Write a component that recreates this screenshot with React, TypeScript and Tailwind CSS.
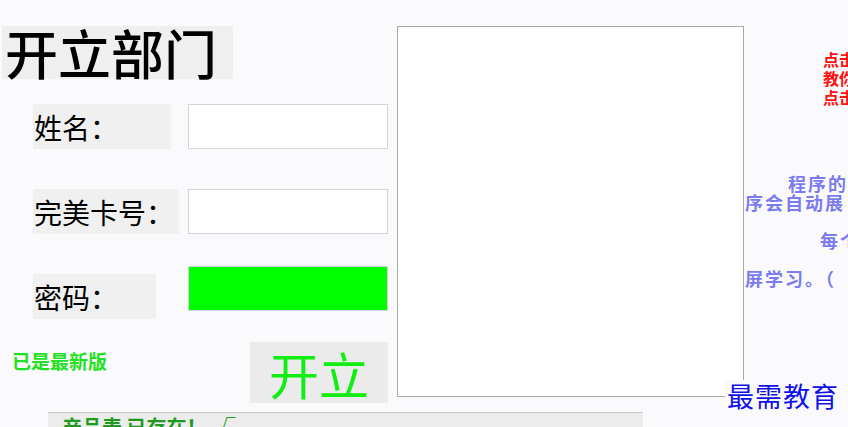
import React from "react";

const cjk = { fontFamily: '"Noto Sans CJK SC", "Noto Sans", sans-serif' };

function LabelRow({ label, labelWidth, children, labelOffset = 0 }: { label: string; labelWidth: number; children: React.ReactNode; labelOffset?: number }) {
  return (
    <div className="flex items-start pl-[33px]">
      <div className="w-[155px] shrink-0" style={{ paddingTop: labelOffset }}>
        <div className="flex h-[45px] items-center bg-[#f0f0f0] pl-[1px] text-[28px] leading-none text-black" style={{ width: labelWidth }}>
          {label}
        </div>
      </div>
      {children}
    </div>
  );
}

export default function App() {
  return (
    <div className="relative h-[427px] w-[848px] overflow-hidden bg-[#fafafc]" style={cjk}>
      <div className="flex">
        {/* left form column */}
        <div className="flex w-[397px] shrink-0 flex-col">
          <div className="ml-[2px] mt-[26px] flex h-[53px] w-[231px] items-center bg-[#efefef] pl-[3px] text-[53px] font-medium leading-none text-black">
            开立部门
          </div>

          <div className="mt-[25px] flex flex-col gap-[40px]">
            <LabelRow label="姓名：" labelWidth={138}>
              <div className="h-[45px] w-[200px] border border-[#d4d4d8] bg-white" />
            </LabelRow>
            <LabelRow label="完美卡号：" labelWidth={146}>
              <div className="h-[45px] w-[200px] border border-[#d4d4d8] bg-white" />
            </LabelRow>
          </div>

          <div className="mt-[32px]">
            <LabelRow label="密码：" labelWidth={123} labelOffset={8}>
              <div className="h-[45px] w-[200px] border border-[#d4d4d8] bg-[#00ff00]" />
            </LabelRow>
          </div>

          <div className="mt-[23px] flex items-start">
            <div className="ml-[12px] mt-[8px] w-[238px] text-[19px] font-bold leading-[22px] text-[#22e022]">已是最新版</div>
            <div className="flex h-[61px] w-[138px] items-center justify-center bg-[#ebebeb] text-[50px] leading-none text-[#11ee11]">
              开立
            </div>
          </div>
        </div>

        {/* preview box */}
        <div className="mt-[26px] h-[371px] w-[347px] shrink-0 border border-[#a8a8a8] bg-white" />

        {/* right notes */}
        <div className="min-w-0 flex-1 overflow-hidden whitespace-nowrap font-bold">
          <div className="mt-[50px] text-[16px] leading-[19px] text-[#ff1010]">
            <div className="pl-[79px]">点击</div>
            <div className="pl-[79px]">教你</div>
            <div className="pl-[79px]">点击</div>
          </div>
          <div className="mt-[67px] text-[18px] leading-[19px] tracking-[2px] text-[#7b7bf0]">
            <div className="pl-[44px]">程序的</div>
            <div className="pl-[1px]">序会自动展</div>
            <div>&nbsp;</div>
            <div className="pl-[76px]">每个</div>
            <div>&nbsp;</div>
            <div className="pl-[1px]">屏学习。（</div>
          </div>
        </div>
      </div>

      {/* status bar */}
      <div className="ml-[48px] mt-[9px] h-[40px] w-[595px] border-t border-[#c8c8c8] bg-[#ececec] pl-[14px] pt-[2px] text-[20px] font-bold leading-[24px] text-[#1f9a1f]">
        产品表 已存在！ &nbsp;√
      </div>

      {/* watermark */}
      <div className="absolute left-[725px] top-[380px] bg-[#fafafc] px-[2px] text-[27px] leading-[32px] tracking-[1px] text-[#1010e8]">
        最需教育
      </div>
    </div>
  );
}
